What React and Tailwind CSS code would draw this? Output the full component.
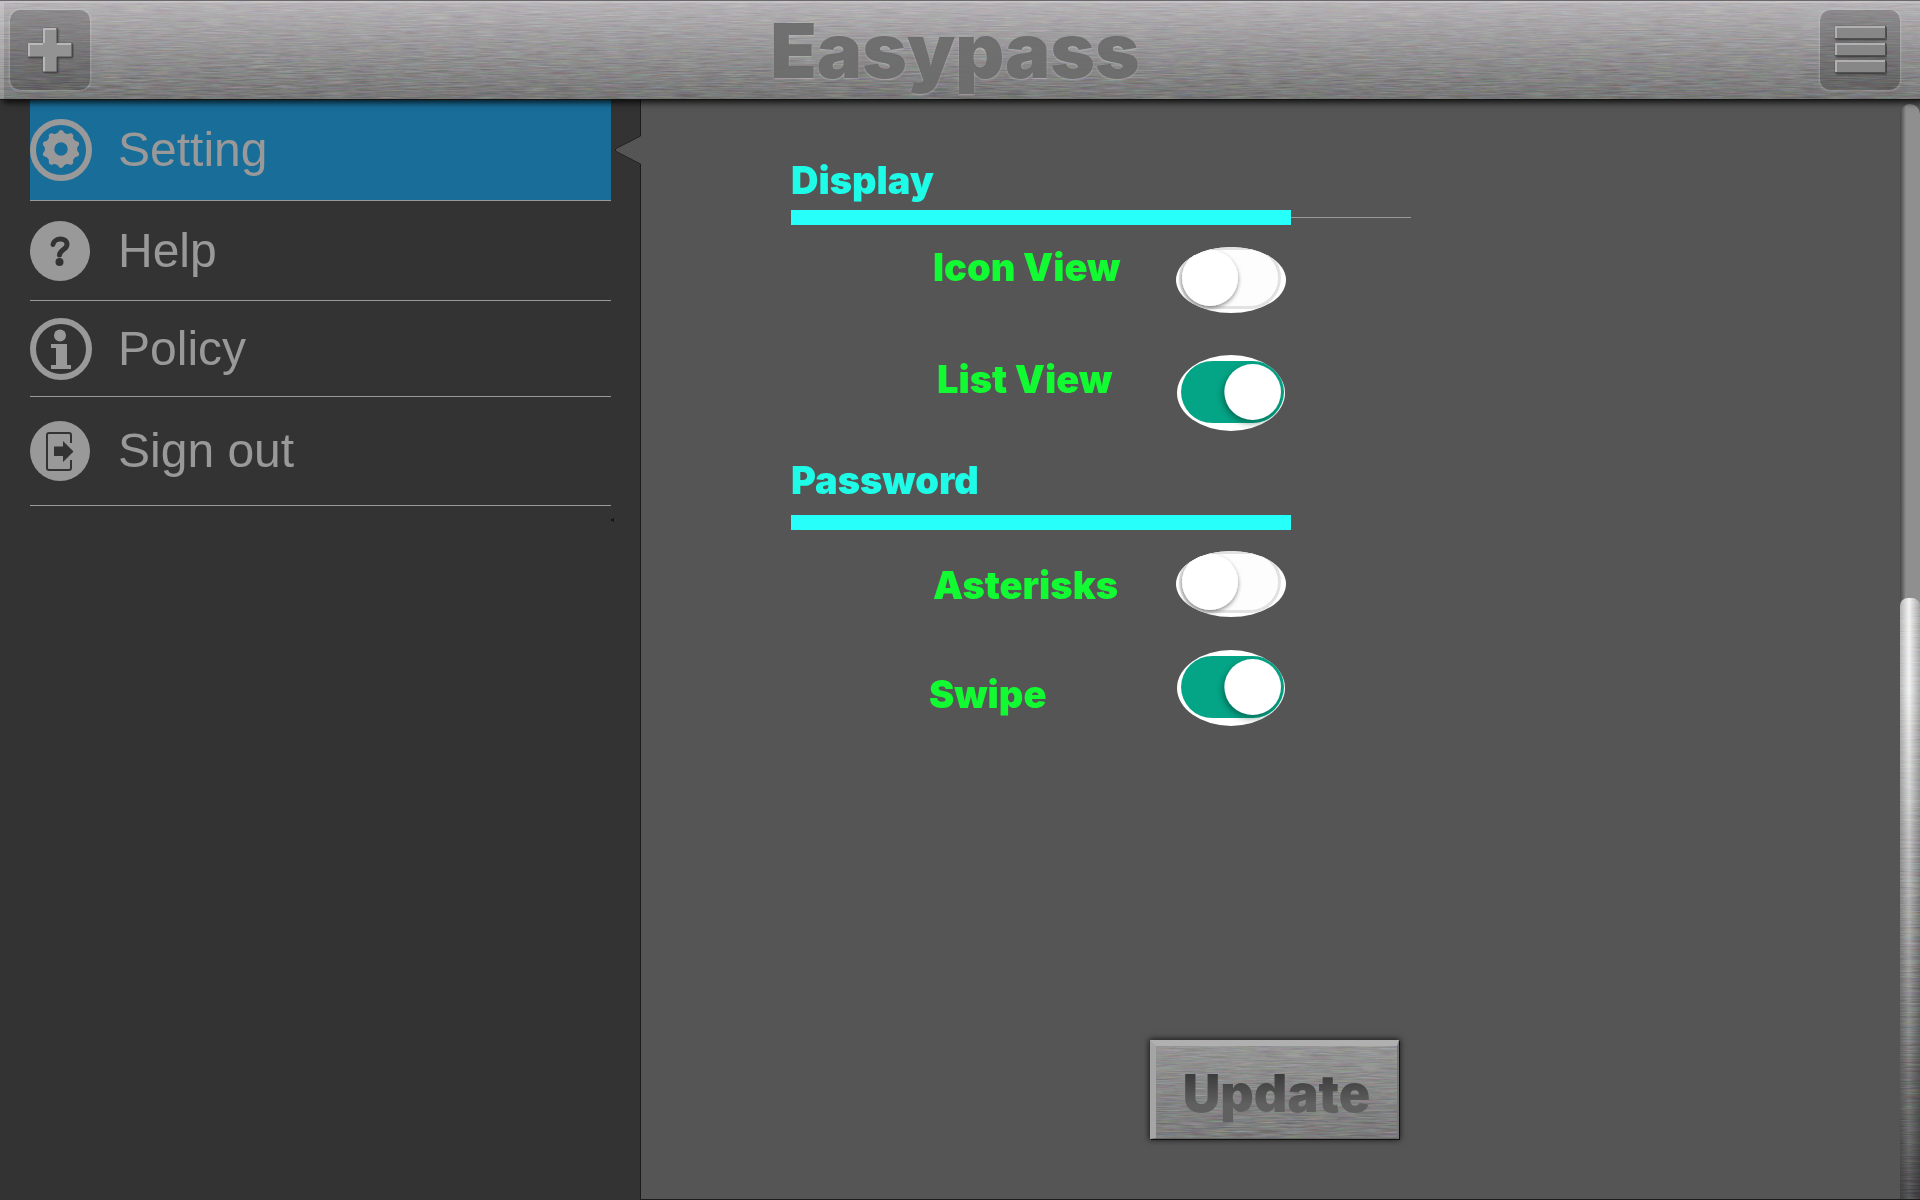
import { useState } from "react";

function Brushed({ id, opacity = "0.26" }) {
  return (
    <svg className="pointer-events-none absolute inset-0 h-full w-full" aria-hidden="true">
      <filter id={id} x="0" y="0" width="100%" height="100%" colorInterpolationFilters="sRGB">
        <feTurbulence type="fractalNoise" baseFrequency="0.04 0.75" numOctaves="3" seed="7" />
        <feColorMatrix
          type="matrix"
          values="0.8 0.3 0.3 0 -0.22  0.3 0.8 0.3 0 -0.22  0.3 0.3 0.8 0 -0.22  0 0 0 0 1"
        />
      </filter>
      <rect width="100%" height="100%" filter={`url(#${id})`} opacity={opacity} className="mix-blend-overlay" />
    </svg>
  );
}

function BevelDefs({ id }) {
  return (
    <filter id={id} x="-20%" y="-20%" width="150%" height="150%">
      <feDropShadow dx="1" dy="1" stdDeviation="1" floodColor="#2c2c2c" floodOpacity="0.9" />
    </filter>
  );
}

function PlusIcon() {
  const d = "M15 0h14v15h15v14H29v15H15V29H0V15h15z";
  return (
    <svg className="h-12 w-12" viewBox="-2 -2 48 48" aria-hidden="true">
      <BevelDefs id="plusBevel" />
      <path d={d} fill="#939393" filter="url(#plusBevel)" />
      <path d="M16 15V1h12M1 29V16h14M16 44V29M29 16h14" fill="none" stroke="#b8b8b8" strokeWidth="2" />
      <path d="M29 0v15M44 15v14H29v15H15M0 29h15" fill="none" stroke="#4b4b4b" strokeWidth="1" />
    </svg>
  );
}

function MenuIcon() {
  return (
    <svg className="h-[54px] w-[54px]" viewBox="-2 -3 54 54" aria-hidden="true">
      <BevelDefs id="menuBevel" />
      {[0, 17, 34].map((y) => (
        <g key={y}>
          <rect x="0" y={y} width="51" height="13" fill="#878787" filter="url(#menuBevel)" />
          <path d={`M1 ${y + 13}V${y + 1}H51`} fill="none" stroke="#b0b0b0" strokeWidth="2" />
          <path d={`M50.5 ${y}V${y + 12.5}H0`} fill="none" stroke="#505050" />
        </g>
      ))}
    </svg>
  );
}

function GearIcon() {
  return (
    <svg className="h-[62px] w-[62px]" viewBox="0 0 62 62" aria-hidden="true">
      <circle cx="31" cy="31" r="28" fill="none" stroke="#999" strokeWidth="6" />
      <circle cx="31" cy="30" r="11.500" fill="none" stroke="#999" strokeWidth="9.500" />
      {[0, 36, 72, 108, 144, 180, 216, 252, 288, 324].map((a) => (
        <path key={a} d="M27 15l2-3q2-2 4 0l2 3z" fill="#999" transform={`rotate(${a} 31 30)`} />
      ))}
    </svg>
  );
}

function HelpIcon() {
  return (
    <svg className="h-[60px] w-[60px]" viewBox="0 0 60 60" aria-hidden="true">
      <circle cx="30" cy="30" r="30" fill="#999" />
      <path d="M23 23.500c1-7 14-7.500 14 0 0 5-7 5-7.500 10.500" fill="none" stroke="#333" strokeWidth="5" strokeLinecap="round" />
      <circle cx="29.500" cy="41" r="4" fill="#333" />
    </svg>
  );
}

function InfoIcon() {
  return (
    <svg className="h-[62px] w-[62px]" viewBox="0 0 62 62" aria-hidden="true">
      <circle cx="31" cy="31" r="28" fill="none" stroke="#999" strokeWidth="6" />
      <circle cx="30" cy="17.500" r="6" fill="#999" />
      <path d="M21 26h16v21h4v4H21v-4h5V30h-5z" fill="#999" />
    </svg>
  );
}

function SignOutIcon() {
  return (
    <svg className="h-[60px] w-[60px]" viewBox="0 0 60 60" aria-hidden="true">
      <circle cx="30" cy="30" r="30" fill="#999" />
      <path d="M41 22V14q0-2-2-2H19q-2 0-2 2v33q0 2 2 2h20q2 0 2-2v-8" fill="none" stroke="#333" strokeWidth="2" />
      <path d="M24 25.500h9V20l10.500 10.500L33 41v-6h-9z" fill="#333" />
    </svg>
  );
}

const menu = [
  { label: "Setting", Icon: GearIcon, row: "h-[101px]" },
  { label: "Help", Icon: HelpIcon, row: "h-[100px]" },
  { label: "Policy", Icon: InfoIcon, row: "h-24" },
  { label: "Sign out", Icon: SignOutIcon, row: "h-[109px]" },
];

function ToggleArt({ id, on }) {
  if (on) {
    return (
      <svg className="h-[76px] w-[108px]" viewBox="0 0 107 76" preserveAspectRatio="none" aria-hidden="true">
        <clipPath id={`${id}c`}><ellipse cx="53.500" cy="38" rx="53.500" ry="38" /></clipPath>
        <filter id={`${id}s`} x="-30%" y="-30%" width="160%" height="160%">
          <feDropShadow dx="-2" dy="3" stdDeviation="3" floodColor="#003c30" floodOpacity="0.55" />
        </filter>
        <g clipPath={`url(#${id}c)`}>
          <rect width="107" height="76" fill="#fff" />
          <rect x="4" y="6" width="102" height="62" rx="31" fill="#04a587" />
          <circle cx="75" cy="37" r="28" fill="#fff" filter={`url(#${id}s)`} />
        </g>
      </svg>
    );
  }
  return (
    <svg className="h-[66px] w-[110px]" viewBox="0 0 110 66" aria-hidden="true">
      <clipPath id={`${id}c`}><ellipse cx="55" cy="33" rx="55" ry="33" /></clipPath>
      <filter id={`${id}s`} x="-30%" y="-30%" width="160%" height="170%">
        <feDropShadow dx="0" dy="2" stdDeviation="2" floodColor="#000" floodOpacity="0.45" />
      </filter>
      <g clipPath={`url(#${id}c)`}>
        <rect width="110" height="66" fill="#fff" />
        <rect x="4.500" y="1.500" width="99" height="59" rx="29.500" fill="#fdfdfd" stroke="#e2e2e2" strokeWidth="3" />
        <circle cx="34" cy="31" r="28" fill="#fff" filter={`url(#${id}s)`} />
      </g>
    </svg>
  );
}

function SettingRow({ label, id, initial, className, labelClass = "" }) {
  const [on, setOn] = useState(initial);
  return (
    <label className={`flex w-[358px] cursor-pointer justify-between ${className}`}>
      <span className={`whitespace-nowrap text-[38px] leading-10 font-black text-[#12fb32] ${labelClass}`}>{label}</span>
      <span className="flex w-[112px] justify-center">
        <input type="checkbox" role="switch" className="sr-only" checked={on} onChange={() => setOn(!on)} />
        <ToggleArt id={id} on={on} />
      </span>
    </label>
  );
}

export default function App() {
  return (
    <div className="flex min-h-screen flex-col bg-[#333] font-['Inter',sans-serif]">
      <header className="relative z-20 flex h-[100px] items-center justify-between border-t border-b border-t-[#6b686b] border-b-[#141614] bg-linear-to-b from-[#b8b5b8] to-[#777] px-2.5 shadow-[3px_3px_6px_rgba(0,0,0,0.75)]">
        <Brushed id="headerGrain" />
        <span className="pointer-events-none absolute inset-0 border-t-2 border-l-4 border-white/20" />
        <button type="button" aria-label="Add" className="relative flex h-20 w-20 items-center justify-center rounded-[10px] bg-black/20 shadow-[0_0_2px_1px_rgba(255,255,255,0.2)]">
          <PlusIcon />
        </button>
        <h1 className="relative text-[76px] leading-[92px] font-black text-[#676767]/90 [text-shadow:0_1px_2px_rgba(255,255,255,0.3)]">Easypass</h1>
        <button type="button" aria-label="Menu" className="relative mr-2.5 flex h-20 w-20 items-center justify-center rounded-[10px] bg-black/20 shadow-[0_0_2px_1px_rgba(255,255,255,0.2)]">
          <MenuIcon />
        </button>
      </header>

      <div className="flex flex-1">
        <nav className="w-1/3 pr-[29px] pl-[30px] font-['Liberation_Sans',Arial,sans-serif]">
          {menu.map(({ label, Icon, row }, i) => (
            <a
              key={label}
              href="#"
              className={`flex items-center border-b border-[#999] text-[48px] leading-[56px] text-[#999] ${row} ${i === 0 ? "bg-[#196d99]" : ""}`}
            >
              <span className="flex w-[88px] shrink-0">
                <Icon />
              </span>
              {label}
            </a>
          ))}
          <div className="flex justify-end pt-3">
            <svg className="-mr-1 h-4 w-1" viewBox="0 0 4 16" aria-hidden="true">
              <path d="M0 1h2v-1h1v4H2V3H0z" fill="#161616" />
            </svg>
          </div>
        </nav>

        <main className="relative flex flex-1 flex-col border-b border-l border-[#1c1c1c] bg-[#555] pt-[60px] pl-[150px]">
          <svg className="absolute top-[35px] -left-[27px] h-[30px] w-7" viewBox="0 0 28 30" aria-hidden="true">
            <path d="M28 0.500H26.500L2 13Q0 15 2 17L26.500 29.500H28z" fill="#555" />
            <path d="M26.500 0V1L2 13.500Q0.500 15 2 16.500L26.500 29V30" fill="none" stroke="#1c1c1c" />
          </svg>

          <section>
            <h2 className="text-[38px] leading-10 font-black text-[#1efce8]">Display</h2>
            <div className="mt-2.5 flex items-center">
              <div className="h-[15px] w-[500px] bg-[#26fffa]" />
              <div className="h-px w-[120px] bg-[#999]" />
            </div>
            <SettingRow label="Icon View" id="icon" initial={false} className="mt-[22px] ml-[138px]" labelClass="pl-1" />
            <SettingRow label="List View" id="list" initial className="mt-[42px] ml-[138px]" labelClass="pt-1 pl-2" />
          </section>

          <section className="mt-[29px]">
            <h2 className="text-[38px] leading-10 font-black text-[#1efce8]">Password</h2>
            <div className="mt-[15px] h-[15px] w-[500px] bg-[#26fffa]" />
            <SettingRow label="Asterisks" id="ast" initial={false} className="mt-[21px] ml-[138px]" labelClass="pt-3.5 pl-1" />
            <SettingRow label="Swipe" id="swipe" initial className="mt-[33px] ml-[138px]" labelClass="pt-6" />
          </section>

          <button
            type="button"
            className="relative mt-auto mb-[60px] ml-[359px] flex h-[99px] w-[249px] items-center justify-center border-t-[6px] border-r-2 border-b border-l-[6px] border-t-[#b0b0b0] border-r-[#777] border-b-[#666] border-l-[#a5a5a5] bg-linear-to-b from-[#969696] to-[#7c7c7c] shadow-[1px_1px_0_#111,0_0_6px_1px_rgba(0,0,0,0.7)]"
          >
            <Brushed id="updateGrain" />
            <span className="relative bg-linear-to-b from-[#3a3a3a] from-20% to-[#606060] to-70% bg-clip-text pt-1 text-[52px] leading-[60px] font-black text-transparent">Update</span>
          </button>

          <div className="absolute top-1 right-0 bottom-0 flex w-5 flex-col rounded-t-[10px] bg-linear-to-r from-[#474747] from-0% via-[#8f8f8f] via-30% to-[#8f8f8f] to-100%">
            <div className="relative mt-auto h-[601px] overflow-hidden rounded-t-[8px] bg-linear-to-r from-[#b5b5b5] via-[#f4f4f4] via-45% to-[#a8a8a8]">
              <div className="h-full bg-linear-to-b from-black/0 from-15% to-black/65" />
              <Brushed id="thumbGrain" />
            </div>
          </div>
        </main>
      </div>
    </div>
  );
}
